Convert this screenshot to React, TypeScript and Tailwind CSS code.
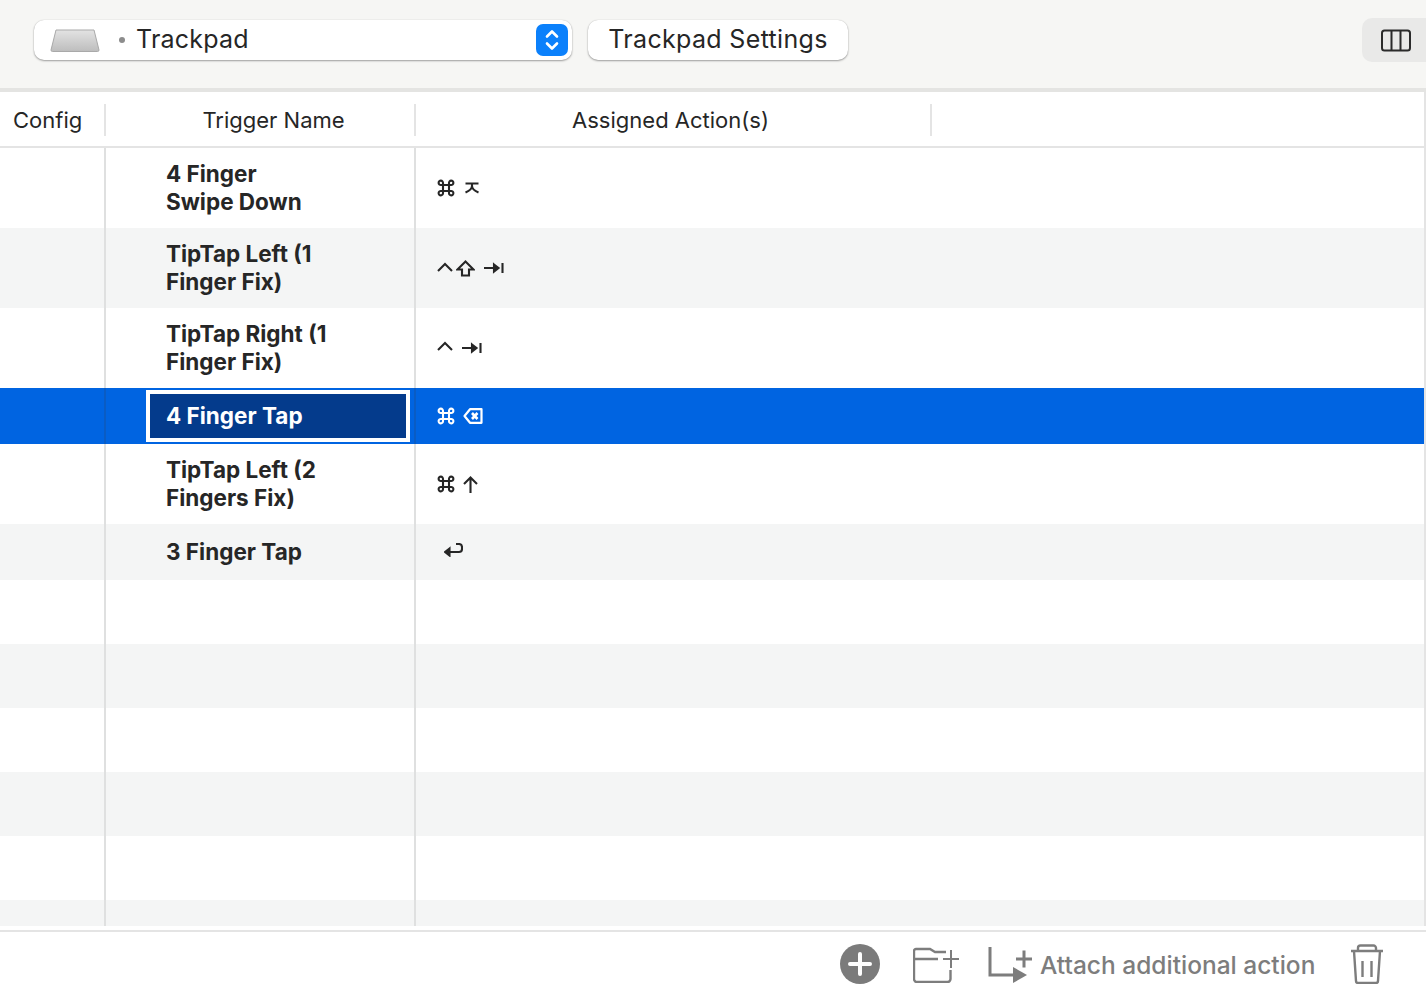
import React from 'react';

const stroke = { fill: 'none', stroke: 'currentColor', strokeWidth: 2.1, strokeLinecap: 'butt', strokeLinejoin: 'miter' } as const;

const Cmd = () => (
  <svg width="18" height="18" viewBox="0 0 18 18" {...stroke}>
    <path d="M6 6h6v6H6z M6 6H4a2.2 2.2 0 1 1 2-2z M12 6V4a2.2 2.2 0 1 1 2 2z M12 12h2a2.2 2.2 0 1 1-2 2z M6 12v2a2.2 2.2 0 1 1-2-2z" />
  </svg>
);
const Option = () => (
  <svg width="16" height="12" viewBox="0 0 16 12" {...stroke}>
    <path d="M1.500 1.500h13 M8 1.500v2.500 C8 6.500 5 9 1.500 10.500 M8 4 C8 6.500 11 9 14.500 10.500" />
  </svg>
);
const Ctrl = () => (
  <svg width="16" height="10" viewBox="0 0 16 10" {...stroke}>
    <path d="M1 9l7-7 7 7" />
  </svg>
);
const Shift = () => (
  <svg width="19" height="17" viewBox="0 0 19 17" {...stroke}>
    <path d="M9.500 1.500L1.500 9.500h4.500v6h7v-6h4.500z" />
  </svg>
);
const TabKey = () => (
  <svg width="20" height="12" viewBox="0 0 20 12" {...stroke}>
    <path d="M0 6h14 M10 2.500L14.500 6 10 9.500z" fill="currentColor" />
    <path d="M18.500 1v10" />
  </svg>
);
const Backspace = () => (
  <svg width="20" height="16" viewBox="0 0 20 16" fill="none" stroke="currentColor" strokeWidth="2.2" strokeLinejoin="round">
    <path d="M7 1.200h11.500v13.600H7L1.500 8z" />
    <path d="M9 5l5.500 6 M14.500 5L9 11" strokeWidth="2.600" />
  </svg>
);
const ArrowUp = () => (
  <svg width="15" height="17" viewBox="0 0 15 17" {...stroke}>
    <path d="M7.500 17V2 M1 8l6.500-6.500L14 8" />
  </svg>
);
const Return = () => (
  <svg width="19" height="14" viewBox="0 0 19 14" {...stroke}>
    <path d="M12 1h3a3 3 0 0 1 3 3v2a3 3 0 0 1-3 3H3" />
    <path d="M5.500 5.500L1 9l4.500 3.500z" fill="currentColor" />
  </svg>
);

type Row = { name: string[]; h: string; keys?: React.ReactNode; selected?: boolean; alt?: boolean };

const rows: Row[] = [
  { name: ['4 Finger', 'Swipe Down'], h: 'h-[80px]', keys: <div className="flex items-center gap-[9px]"><Cmd /><Option /></div> },
  { name: ['TipTap Left (1', 'Finger Fix)'], h: 'h-[80px]', alt: true, keys: <div className="flex items-center"><span className="mb-[3px]"><Ctrl /></span><span className="ml-[3px]"><Shift /></span><span className="ml-[9px]"><TabKey /></span></div> },
  { name: ['TipTap Right (1', 'Finger Fix)'], h: 'h-[80px]', keys: <div className="flex items-center gap-[9px]"><span className="mb-[5px]"><Ctrl /></span><TabKey /></div> },
  { name: ['4 Finger Tap'], h: 'h-[56px]', selected: true, keys: <div className="flex items-center gap-[8px]"><Cmd /><Backspace /></div> },
  { name: ['TipTap Left (2', 'Fingers Fix)'], h: 'h-[80px]', keys: <div className="flex items-center gap-[8px]"><Cmd /><ArrowUp /></div> },
  { name: ['3 Finger Tap'], h: 'h-[56px]', alt: true, keys: <div className="ml-[7px] mb-[4px] flex items-center"><Return /></div> },
  { name: [], h: 'h-[64px]' },
  { name: [], h: 'h-[64px]', alt: true },
  { name: [], h: 'h-[64px]' },
  { name: [], h: 'h-[64px]', alt: true },
  { name: [], h: 'h-[64px]' },
  { name: [], h: 'h-[26px]', alt: true },
];

function TableRow({ row }: { row: Row }) {
  const bg = row.selected ? 'bg-[#0064e1] text-white' : row.alt ? 'bg-[#f4f5f5] text-[#262626]' : 'bg-white text-[#262626]';
  const line = row.selected ? 'border-[#0a5cc4]' : 'border-[#dfe0e0]';
  return (
    <div className={`flex ${row.h} ${bg}`}>
      <div className={`w-[106px] shrink-0 border-r-2 ${line}`} />
      <div className={`w-[310px] shrink-0 border-r-2 ${line} flex items-center`}>
        {row.selected ? (
          <div className="ml-[40px] flex h-[52px] w-[264px] items-center border-[4px] border-white bg-[#043b8c] pl-[16px] text-[22.5px] leading-[28px] font-bold">
            {row.name[0]}
          </div>
        ) : (
          <div className="pl-[60px] text-[22.5px] leading-[28px] font-bold">
            {row.name.map(n => <div key={n}>{n}</div>)}
          </div>
        )}
      </div>
      <div className="flex flex-1 items-center pl-[21px]">{row.keys}</div>
    </div>
  );
}

export default function App() {
  return (
    <div className="flex h-[994px] w-[1426px] flex-col overflow-hidden bg-white font-['Inter',sans-serif] text-[#262626]">
      {/* toolbar */}
      <div className="flex h-[88px] shrink-0 items-start bg-[#f6f6f4] pt-[20px] pl-[34px]">
        <div className="flex h-[40px] w-[538px] items-center rounded-[10px] bg-white pr-[4px] pl-[16px] shadow-[0_1px_2px_rgba(0,0,0,0.35),0_0_1px_rgba(0,0,0,0.2)]">
          <svg width="50" height="24" viewBox="0 0 50 24">
            <defs>
              <linearGradient id="pad" x1="0" y1="0" x2="0" y2="1">
                <stop offset="0" stopColor="#e3e3e3" />
                <stop offset="1" stopColor="#bdbdbd" />
              </linearGradient>
            </defs>
            <path d="M6 2h38l5 20a1.500 1.500 0 0 1-1.500 1.500H2.500A1.500 1.500 0 0 1 1 22z" fill="url(#pad)" stroke="#a9a9a9" strokeWidth="1" />
          </svg>
          <span className="ml-[19px] h-[6px] w-[6px] rounded-full bg-[#8c8c8c]" />
          <span className="ml-[11px] text-[25px] tracking-[0.2px]">Trackpad</span>
          <div className="ml-auto flex h-[32px] w-[32px] items-center justify-center rounded-[7px] bg-[#0b80fb]">
            <svg width="16" height="24" viewBox="0 0 16 24" fill="none" stroke="white" strokeWidth="2.6" strokeLinecap="round" strokeLinejoin="round">
              <path d="M3 8.500L8 3.500l5 5 M3 15.500l5 5 5-5" />
            </svg>
          </div>
        </div>
        <button className="ml-[16px] flex h-[40px] w-[260px] items-center justify-center rounded-[10px] bg-white text-[25px] tracking-[0.33px] text-[#262626] shadow-[0_1px_2px_rgba(0,0,0,0.35),0_0_1px_rgba(0,0,0,0.2)]">
          Trackpad Settings
        </button>
        <div className="ml-auto -mt-[2px] flex h-[44px] w-[64px] items-center rounded-l-[10px] bg-[#e9e9e8] pl-[19px]">
          <svg width="30" height="23" viewBox="0 0 30 23" fill="none" stroke="#2b2b2b" strokeWidth="2">
            <rect x="1" y="1.500" width="28" height="20" rx="2.500" />
            <path d="M10.500 1.500v20 M19.500 1.500v20" />
          </svg>
        </div>
      </div>
      <div className="h-[4px] shrink-0 bg-[#e4e4e2]" />

      <div className="flex min-h-0 flex-1 flex-col border-r-2 border-[#e4e4e4]">
        {/* column headers */}
        <div className="flex h-[56px] shrink-0 items-center border-b-2 border-[#e4e4e4] pt-[1px] text-[22px]">
          <div className="flex h-[32px] w-[106px] shrink-0 items-center border-r-2 border-[#e4e4e4] pt-[2px] pl-[13px]">Config</div>
          <div className="flex h-[32px] w-[310px] shrink-0 items-center justify-center border-r-2 border-[#e4e4e4] pt-[2px] pl-[27px]">Trigger Name</div>
          <div className="flex h-[32px] w-[516px] shrink-0 items-center justify-center border-r-2 border-[#e4e4e4] pt-[2px] pr-[5px]">Assigned Action(s)</div>
        </div>
        {/* rows */}
        <div className="flex flex-col">
          {rows.map((r, i) => <TableRow key={i} row={r} />)}
        </div>
      </div>

      {/* footer */}
      <div className="mt-[4px] flex h-[64px] shrink-0 items-center border-t-2 border-[#e4e4e4] pt-[1px] text-[#7d7d7d]">
        <div className="ml-[840px] flex items-center">
          <svg width="40" height="40" viewBox="0 0 40 40">
            <circle cx="20" cy="20" r="20" fill="#7b7b7b" />
            <path d="M20 10v20 M10 20h20" stroke="white" strokeWidth="4" strokeLinecap="round" />
          </svg>
          <svg className="ml-[33px]" width="46" height="38" viewBox="0 0 46 38" fill="none" stroke="#7d7d7d" strokeWidth="2.4">
            <path d="M37.500 25v9a3 3 0 0 1-3 3H4a3 3 0 0 1-3-3V6a2 2 0 0 1 2-2h14l5 3h11 M1 14h24" />
            <path d="M38 5v18 M30 14h16" strokeWidth="2" />
          </svg>
          <svg className="ml-[29px]" width="44" height="38" viewBox="0 0 44 38" fill="none" stroke="#7d7d7d" strokeWidth="3">
            <path d="M2 2v28h24" />
            <path d="M25 22l14 8-14 8z" fill="#7d7d7d" stroke="none" />
            <path d="M36 5.500v17 M28 14h16" />
          </svg>
          <span className="mt-[4px] ml-[8px] text-[24.5px] font-medium">Attach additional action</span>
          <svg className="ml-[35px]" width="34" height="40" viewBox="0 0 34 40" fill="none" stroke="#7d7d7d" strokeWidth="2.4">
            <path d="M1 7h32 M8 6.500V4a2.500 2.500 0 0 1 2.500-2.500h13A2.500 2.500 0 0 1 26 4v2.500" />
            <path d="M4 7l2 30a2 2 0 0 0 2 2h18a2 2 0 0 0 2-2l2-30" />
            <path d="M12.500 17v16 M21.500 17v16" />
          </svg>
        </div>
      </div>
    </div>
  );
}
